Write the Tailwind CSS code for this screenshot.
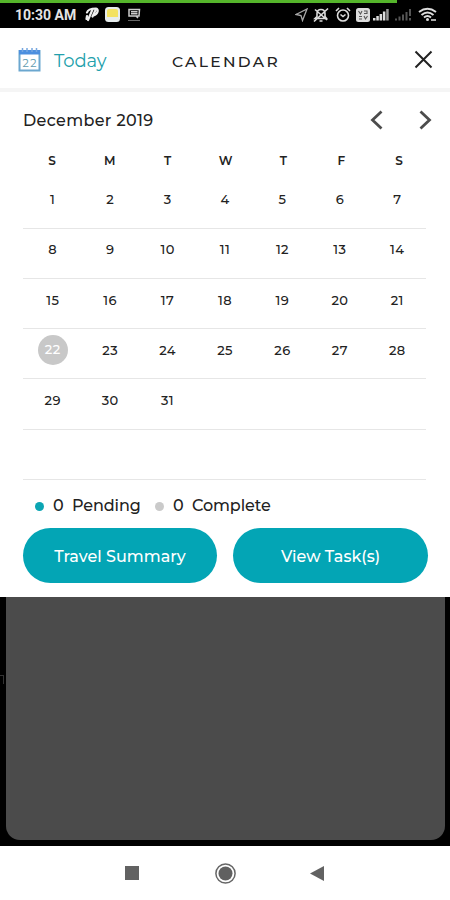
<!DOCTYPE html>
<html lang="en">
<head>
<meta charset="utf-8">
<title>Calendar</title>
<script src="https://cdn.jsdelivr.net/npm/@tailwindcss/browser@4"></script>
</head>
<body class="w-[450px] h-[900px] overflow-hidden bg-black font-['Montserrat','Inter',sans-serif] text-[#222]">
<div class="flex h-[900px] flex-col">
  <div class="h-[28px] shrink-0 bg-black">
    <div class="h-[3px] w-[397px] bg-[#55b52b]"></div>
    <div class="flex h-[23px] items-center pl-[15px] pr-[13px] text-[#e4e4e4]">
      <span class="w-[63px] whitespace-nowrap pt-[1px] font-['Roboto',sans-serif] text-[14px] font-bold leading-none">10:30 AM</span>
      <svg class="ml-[7px]" width="14" height="15" viewBox="0 0 14 15" fill="none" stroke="#eee" stroke-linecap="round" stroke-linejoin="round"><path d="M2 5.500C3 2 7 1.500 11 1.500C14 2 13 7 8.500 8.500M7.500 2.500L3 13M11 2L7.500 9.500M2 9L1.500 12" stroke-width="2.200"/></svg>
      <svg class="ml-[6px]" width="15" height="15" viewBox="0 0 15 15"><rect width="15" height="15" rx="3.500" fill="#e6ecec"/><path d="M2 4Q2 2 4 2H11Q13 2 13 4V10H2Z" fill="#f3e261"/></svg>
      <svg class="ml-[7px]" width="14" height="14" viewBox="0 0 14 14" fill="none" stroke="#ccc"><path d="M2 1.500H12.500L12 8H2ZM4 3.800H10.500M4 5.800H10.500M9 8L11 10" stroke-width="1.500"/><path d="M1 12.500H13" stroke="#666"/></svg>
      <div class="ml-auto flex items-center">
        <svg width="13" height="14" viewBox="0 0 13 14" fill="none" stroke="#a8a8a8" stroke-width="1.300"><path d="M1 6.500L12 1L7.500 12.500L6 7.500Z"/></svg>
        <svg class="ml-[5px]" width="16" height="16" viewBox="0 0 16 16" fill="none" stroke="#ddd" stroke-width="1.600"><path d="M2 11.500H13.500L12 9.500V6.500Q12 2.500 8 2.500Q4 2.500 4 6.500V9.500ZM6.500 14H9.500M15 1.500L1 14.500M2 2.500L14 13"/></svg>
        <svg class="ml-[6px]" width="16" height="16" viewBox="0 0 16 16" fill="none" stroke="#ddd" stroke-width="1.600"><circle cx="8" cy="8.500" r="5.500"/><path d="M1 4L4 1M15 4L12 1M5.500 7.500L8 9.500L10.500 7.500"/></svg>
        <svg class="ml-[5px]" width="14" height="14" viewBox="0 0 14 14"><rect width="14" height="14" rx="2.500" fill="#ddd"/><path d="M2.500 3L4.500 6L6 3M8 3H11V5.500H8M3 8.500H6M3 11H6M8 8L9.500 11L11.500 8" fill="none" stroke="#555" stroke-width="1.100"/></svg>
        <svg class="ml-[3px]" width="16" height="13" viewBox="0 0 16 13" fill="#ddd"><path d="M0 10H2.500V12.500H0ZM3.300 8H5.800V12.500H3.300ZM6.600 6H9.100V12.500H6.600ZM9.900 3.500H12.400V12.500H9.900Z"/><path d="M13.200 1H15.700V12.500H13.200Z" fill="#999"/></svg>
        <svg class="ml-[6px]" width="17" height="13" viewBox="0 0 17 13" fill="#555"><path d="M0 10.500H2V12.500H0ZM3.500 8.500H5.500V12.500H3.500ZM7 6.500H9V12.500H7ZM10.500 4H12.500V12.500H10.500ZM14 1H16V8H14ZM14 10H16V12.500H14Z"/></svg>
        <svg class="ml-[6px]" width="19" height="15" viewBox="0 0 19 15" fill="none" stroke="#ddd" stroke-width="2"><path d="M1 5Q9.500-1.500 18 5M3.500 8Q9.500 3 15.500 8M6 10.500Q9.500 7.500 13 10.500"/><circle cx="9.500" cy="12.500" r="1.500" fill="#ddd" stroke="none"/><path d="M13 13H18" stroke="#aaa"/></svg>
      </div>
    </div>
  </div>

  <main class="flex h-[569px] shrink-0 flex-col bg-white">
    <header class="flex h-[64px] shrink-0 items-center border-b-4 border-[#f5f5f5] pl-[18px] pr-[17px] pt-[4px]">
      <svg class="mb-[1px]" width="23" height="24" viewBox="0 0 23 24"><rect x="1.500" y="3" width="20" height="19.500" fill="#fff" stroke="#6ba7cf" stroke-width="2"/><path d="M1 2H22V6.500H1Z" fill="#4c8fdf"/><path d="M4.500 0V4M9 0V4M14 0V4M18.500 0V4" stroke="#76a6e0" stroke-width="1.500"/><text x="11.500" y="18.500" text-anchor="middle" font-family="Montserrat, Inter, sans-serif" font-size="11" textLength="14" fill="#609baf">22</text></svg>
      <span class="ml-[13px] w-[118px] pt-[3px] text-[18px] tracking-[-0.1px] text-[#239fac]">Today</span>
      <h1 class="whitespace-nowrap pt-[3px] text-[15.500px] font-medium tracking-[2.300px]">CALENDAR</h1>
      <svg class="mb-[1px] ml-auto" width="19" height="19" viewBox="0 0 19 19" fill="none" stroke="#222" stroke-width="2"><path d="M1.500 1.500L17.500 17.500M17.500 1.500L1.500 17.500"/></svg>
    </header>
    <div class="flex h-[56px] shrink-0 items-center pl-[23px] pr-[18px]">
      <h2 class="whitespace-nowrap pt-[1px] text-[16px] font-medium tracking-[0.350px]">December 2019</h2>
      <svg class="ml-auto" width="13" height="20" viewBox="0 0 13 20" fill="none" stroke="#4c4c4c" stroke-width="2.800"><path d="M11.500 1.500L2.500 10L11.500 18.500"/></svg>
      <svg class="ml-[36px]" width="13" height="20" viewBox="0 0 13 20" fill="none" stroke="#4c4c4c" stroke-width="2.800"><path d="M1.500 1.500L10.500 10L1.500 18.500"/></svg>
    </div>
    <div class="ml-[23px] grid h-[24px] w-[405px] shrink-0 grid-cols-7 items-center pt-[1px] text-center text-[12px] font-semibold">
      <span>S</span><span>M</span><span>T</span><span>W</span><span>T</span><span>F</span><span>S</span>
    </div>
    <div class="ml-[23px] w-[403px] shrink-0 text-center text-[13px] font-medium tracking-[0.400px]">
      <div class="grid h-[56.500px] grid-cols-7 items-center border-b border-[#e6e6e6] pl-[1px]"><span>1</span><span>2</span><span>3</span><span>4</span><span>5</span><span>6</span><span>7</span></div>
      <div class="grid h-[50.300px] grid-cols-7 items-center border-b border-[#e6e6e6] pb-[6px] pl-[1px]"><span>8</span><span>9</span><span>10</span><span>11</span><span>12</span><span>13</span><span>14</span></div>
      <div class="grid h-[50.300px] grid-cols-7 items-center border-b border-[#e6e6e6] pb-[6px] pl-[1px]"><span>15</span><span>16</span><span>17</span><span>18</span><span>19</span><span>20</span><span>21</span></div>
      <div class="grid h-[50.300px] grid-cols-7 items-center border-b border-[#e6e6e6] pb-[6px] pl-[1px]"><span class="mx-auto -mt-[2px] flex size-[30px] items-center justify-center rounded-full bg-[#c8c8c8] pt-[1px] text-white">22</span><span>23</span><span>24</span><span>25</span><span>26</span><span>27</span><span>28</span></div>
      <div class="grid h-[50.300px] grid-cols-7 items-center border-b border-[#e6e6e6] pb-[6px] pl-[1px]"><span>29</span><span>30</span><span>31</span></div>
      <div class="h-[50.300px] border-b border-[#e6e6e6]"></div>
    </div>
    <div class="flex h-[48px] shrink-0 items-center pl-[35px] pt-[5px] text-[16px] font-medium">
      <i class="size-[9px] rounded-full bg-[#0ba5b3]"></i><span class="ml-[9px] w-[19px]">0</span><span class="w-[83px] tracking-[-0.100px]">Pending</span>
      <i class="size-[9px] rounded-full bg-[#cacaca]"></i><span class="ml-[9px] w-[19px]">0</span><span class="tracking-[-0.100px]">Complete</span>
    </div>
    <div class="flex gap-[16px] pl-[23px] text-[16px] font-medium text-white">
      <button class="h-[55px] w-[194px] rounded-full bg-[#03a5b5] pt-[4px]">Travel Summary</button>
      <button class="h-[55px] w-[195px] rounded-full bg-[#03a5b5] pt-[4px]">View Task(s)</button>
    </div>
  </main>

  <div class="flex h-[249px] shrink-0 bg-black pr-[5px]">
    <div class="w-[6px] shrink-0 pt-[78px]"><div class="h-[9px] w-[4px] border-r border-t border-[#333]"></div></div>
    <div class="h-[243px] flex-1 rounded-b-[14px] bg-[#4b4b4b]"></div>
  </div>
  <nav class="flex h-[54px] shrink-0 items-center bg-white pl-[125px]">
    <svg width="14" height="14"><rect width="14" height="14" fill="#626262"/></svg>
    <svg class="ml-[76px]" width="21" height="21" viewBox="0 0 21 21"><circle cx="10.500" cy="10.500" r="9.600" fill="none" stroke="#666" stroke-width="1.500"/><circle cx="10.500" cy="10.500" r="7" fill="#606060"/></svg>
    <svg class="ml-[74px]" width="14" height="15" viewBox="0 0 14 15"><path d="M0 7.500L14 0V15Z" fill="#626262"/></svg>
  </nav>
</div>
</body>
</html>
